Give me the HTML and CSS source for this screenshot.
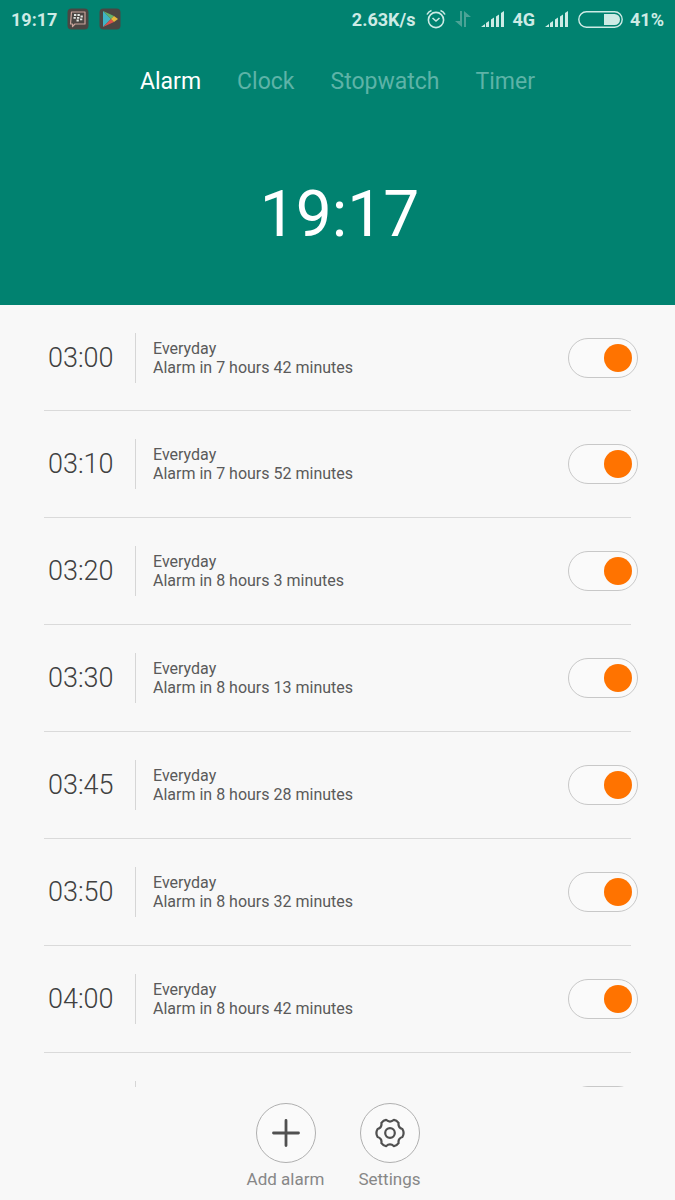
FILE: index.html
```html
<!DOCTYPE html>
<html lang="en">
<head>
<meta charset="utf-8">
<meta name="viewport" content="width=device-width, initial-scale=1">
<title>Alarm</title>
<link rel="stylesheet" href="styles.css">
</head>
<body>
<div class="app">
  <header class="header">
    <div class="status">
      <div class="status-group status-left">
        <span class="status-time">19:17</span>
        <svg class="app-icon" viewBox="0 0 22 22" aria-hidden="true">
          <rect x="0.5" y="0.5" width="21" height="21" rx="4" fill="#4b4643"/>
          <path d="M4.500 4h13.500v12H8l-2.500 2.500V16H3.500z" fill="none" stroke="#c9a49b" stroke-width="1.200" stroke-linejoin="round"/>
          <path d="M7 7h2.300M10.500 7h2.300M6.500 9.800h2.300M10 9.800h2.300M13.500 8.500h2.300M9.500 12.500h2.300M13 11.300h2.300" stroke="#e3e6e2" stroke-width="1.800"/>
        </svg>
        <svg class="app-icon" viewBox="0 0 22 22" aria-hidden="true">
          <rect x="0.500" y="0.500" width="21" height="21" rx="4" fill="#4b4643"/>
          <path d="M4 3v16l8-8z" fill="#3fb4c4"/>
          <path d="M4 3l8 8 3-3z" fill="#62b36b"/>
          <path d="M4 19l8-8 3 3z" fill="#d9534c"/>
          <path d="M12 11l3-3 4 3-4 3z" fill="#e6b93c"/>
        </svg>
      </div>
      <div class="status-group status-right">
        <span>2.63K/s</span>
        <svg class="clock-icon" viewBox="0 0 20 20" aria-hidden="true">
          <circle cx="10" cy="11" r="7.600"/>
          <path d="M6.500 9l3.500 3 3.500-3M1 5.500Q2.500 2.500 5.500 1.500M19 5.500Q17.500 2.500 14.500 1.500"/>
        </svg>
        <svg class="data-icon" viewBox="0 0 16 18" aria-hidden="true"><path d="M5 1h2v16L0 11h5zM9 17V1l7 6h-5v10z"/></svg>
        <svg class="signal-icon" viewBox="0 0 24 16" aria-hidden="true"><path d="M0 16l4-3v3zM5 12l3-2v6H5zM10 8.500l3-2V16h-3zM15 5.500l3-2V16h-3zM20 2l3-2v16h-3z"/></svg>
        <span>4G</span>
        <svg class="signal-icon" viewBox="0 0 24 16" aria-hidden="true"><path d="M0 16l4-3v3zM5 12l3-2v6H5zM10 8.500l3-2V16h-3zM15 5.500l3-2V16h-3zM20 2l3-2v16h-3z"/></svg>
        <svg class="battery-icon" viewBox="0 0 45 17" aria-hidden="true">
          <rect x="0.800" y="0.800" width="43.400" height="15.400" rx="7.700" fill="none" stroke="#cdebe5" stroke-width="1.400"/>
          <path d="M26 3h10.500a5.500 5.500 0 0 1 0 11H26z" fill="#cdebe5"/>
        </svg>
        <span>41%</span>
      </div>
    </div>
    <nav class="tabs">
      <a class="tab tab-active" href="#alarm" aria-current="page">Alarm</a>
      <a class="tab" href="#clock">Clock</a>
      <a class="tab" href="#stopwatch">Stopwatch</a>
      <a class="tab" href="#timer">Timer</a>
    </nav>
    <time class="now">19:17</time>
  </header>

  <main class="alarms">
    <label class="alarm"><span class="alarm-time">03:00</span><span class="alarm-info"><span>Everyday</span><span>Alarm in 7 hours 42 minutes</span></span><input class="switch" type="checkbox" checked></label>
    <label class="alarm"><span class="alarm-time">03:10</span><span class="alarm-info"><span>Everyday</span><span>Alarm in 7 hours 52 minutes</span></span><input class="switch" type="checkbox" checked></label>
    <label class="alarm"><span class="alarm-time">03:20</span><span class="alarm-info"><span>Everyday</span><span>Alarm in 8 hours 3 minutes</span></span><input class="switch" type="checkbox" checked></label>
    <label class="alarm"><span class="alarm-time">03:30</span><span class="alarm-info"><span>Everyday</span><span>Alarm in 8 hours 13 minutes</span></span><input class="switch" type="checkbox" checked></label>
    <label class="alarm"><span class="alarm-time">03:45</span><span class="alarm-info"><span>Everyday</span><span>Alarm in 8 hours 28 minutes</span></span><input class="switch" type="checkbox" checked></label>
    <label class="alarm"><span class="alarm-time">03:50</span><span class="alarm-info"><span>Everyday</span><span>Alarm in 8 hours 32 minutes</span></span><input class="switch" type="checkbox" checked></label>
    <label class="alarm"><span class="alarm-time">04:00</span><span class="alarm-info"><span>Everyday</span><span>Alarm in 8 hours 42 minutes</span></span><input class="switch" type="checkbox" checked></label>
    <label class="alarm"><span class="alarm-time"></span><span class="alarm-info"></span><input class="switch" type="checkbox" aria-label="Alarm"></label>
  </main>

  <footer class="actions">
    <button class="action" type="button">
      <span class="action-circle"><svg class="action-icon" viewBox="0 0 30 30" aria-hidden="true"><path d="M15 2.500v25M2.500 15h25" stroke-width="2.800"/></svg></span>
      <span>Add alarm</span>
    </button>
    <button class="action" type="button">
      <span class="action-circle"><svg class="action-icon" viewBox="0 0 30 30" aria-hidden="true"><circle cx="15" cy="15" r="4.800"/><path d="M11 1.800Q15 5.400 19 1.800Q21.500 2 23.600 4.800Q22.800 9.600 27.400 11Q29.800 15 27.400 19Q22.800 20.400 23.600 25.200Q21.500 28 19 28.200Q15 24.600 11 28.200Q8.500 28 6.400 25.200Q7.200 20.400 2.600 19Q0.200 15 2.600 11Q7.200 9.600 6.400 4.800Q8.500 2 11 1.800Z"/></svg></span>
      <span>Settings</span>
    </button>
  </footer>
</div>
</body>
</html>
```
FILE: styles.css
```css
* {
  box-sizing: border-box;
}

body {
  margin: 0;
  background: #f8f8f8;
  color: #5a5a5a;
  font-family: Roboto, "Liberation Sans", sans-serif;
}

.app {
  display: flex;
  flex-direction: column;
  height: 100vh;
}

.header {
  display: flex;
  flex-direction: column;
  flex: none;
  padding-bottom: 50px;
  background: #018270;
  color: #fff;
}

.status {
  display: flex;
  justify-content: space-between;
  align-items: center;
  height: 38px;
  padding: 0 11px;
  color: #cdebe5;
  font-size: 18px;
  font-weight: 700;
}

.status-group {
  display: flex;
  align-items: center;
}

.status-left {
  gap: 10px;
}

.status-right {
  gap: 7px;
}

.app-icon {
  width: 22px;
  height: 22px;
}

.clock-icon {
  width: 20px;
  height: 20px;
  margin: 0 2px 0 4px;
  fill: none;
  stroke: #cdebe5;
  stroke-width: 1.600;
}

.data-icon {
  width: 16px;
  height: 18px;
  fill: #4ca396;
}

.signal-icon {
  width: 24px;
  height: 16px;
  margin-left: 3px;
  fill: #cdebe5;
}

.battery-icon {
  width: 45px;
  height: 17px;
  margin-left: 2px;
}

.tabs {
  display: flex;
  justify-content: center;
  gap: 36px;
  padding-top: 30px;
  font-size: 23px;
  line-height: 28px;
}

.tab {
  color: #5db3a7;
  text-decoration: none;
}

.tab-active {
  color: #fff;
}

.now {
  padding: 79px 0 0 4px;
  font-size: 64px;
  line-height: 80px;
  text-align: center;
}

.alarms {
  flex: 1;
  min-height: 0;
  padding: 0 44px;
  overflow: hidden;
}

.alarm {
  display: flex;
  align-items: center;
  height: 107px;
  border-bottom: 1px solid #dadada;
}

.alarm:first-child {
  height: 106px;
}

.alarm-time {
  flex: none;
  width: 91px;
  padding-left: 4px;
  color: #404040;
  font-size: 27px;
  font-weight: 300;
  line-height: 50px;
}

.alarm-info {
  display: flex;
  flex: 1;
  flex-direction: column;
  justify-content: center;
  height: 50px;
  padding-left: 17px;
  border-left: 1px solid #d6d6d6;
  font-size: 16px;
  line-height: 19px;
}

.switch {
  display: flex;
  flex: none;
  align-items: center;
  width: 70px;
  height: 40px;
  margin: 0 -7px 0 0;
  padding: 0 5px;
  border: 1px solid #c8c8c8;
  border-radius: 20px;
  background: #fafafa;
  appearance: none;
}

.switch::before {
  width: 28px;
  height: 28px;
  border-radius: 50%;
  background: #bdbdbd;
  content: "";
}

.switch:checked {
  justify-content: flex-end;
}

.switch:checked::before {
  background: #ff7300;
}

.actions {
  display: flex;
  flex: none;
  justify-content: center;
  height: 113px;
  padding-top: 16px;
}

.action {
  display: flex;
  flex-direction: column;
  align-items: center;
  gap: 6px;
  width: 104px;
  padding: 0;
  border: 0;
  background: none;
  color: #878787;
  font-family: inherit;
  font-size: 17px;
  line-height: 20px;
}

.action-circle {
  display: flex;
  justify-content: center;
  align-items: center;
  width: 60px;
  height: 60px;
  border: 1px solid #b0b0b0;
  border-radius: 50%;
  background: #fafafa;
}

.action-icon {
  width: 30px;
  height: 30px;
  fill: none;
  stroke: #505050;
  stroke-width: 2.200;
  stroke-linecap: round;
  stroke-linejoin: round;
}
```
